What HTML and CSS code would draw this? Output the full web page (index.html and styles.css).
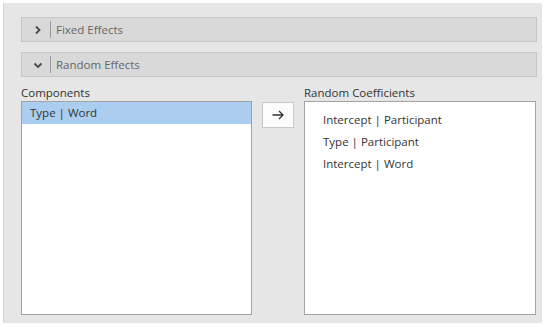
FILE: index.html
```html
<!DOCTYPE html>
<html lang="en">
  <head>
    <meta charset="UTF-8">
    <title>Random Effects</title>
    <link rel="stylesheet" href="styles.css">
  </head>
  <body>
    <div class="panel">
        <div class="section-bar">
            <svg class="chevron" width="10" height="10" viewBox="0 0 10 10">
                <path d="M3 1.5 L6.5 5 L3 8.5" />
            </svg>
            <span class="divider"></span>
            <span class="section-title">Fixed Effects</span>
        </div>
        <div class="section-bar">
            <svg class="chevron" width="10" height="10" viewBox="0 0 10 10">
                <path d="M1.5 3.5 L5 7 L8.5 3.5" />
            </svg>
            <span class="divider"></span>
            <span class="section-title">Random Effects</span>
        </div>

        <div class="effects">
            <div class="column">
                <div class="list-label">Components</div>
                <div class="list-box">
                    <div class="list-item selected">Type | Word</div>
                </div>
            </div>
            <div class="actions">
                <button class="move-button" title="Move">
                    <svg width="12" height="10" viewBox="0 0 12 10">
                        <path d="M0.5 5 H11 M7 1 L11 5 L7 9" />
                    </svg>
                </button>
            </div>
            <div class="column">
                <div class="list-label">Random Coefficients</div>
                <div class="list-box coefficients">
                    <div class="list-item">Intercept | Participant</div>
                    <div class="list-item">Type | Participant</div>
                    <div class="list-item">Intercept | Word</div>
                </div>
            </div>
        </div>
    </div>
  </body>
</html>
```

FILE: styles.css
```css
:root {
    --panel-bg: #e6e6e6;
    --bar-bg: #d9d9d9;
    --bar-border: #c6c6c6;
    --list-border: #a3a3a3;
    --select-bg: #abcdef;
    --text-main: #333;
    --text-muted: #666;
}

body {
    margin: 0;
    background: #fff;
    font-family: 'Open Sans', 'Noto Sans', sans-serif;
    font-size: 11.5px;
    color: var(--text-main);
}

.panel {
    margin: 3px 0 0 3px;
    width: 539px;
    height: 320px;
    box-sizing: border-box;
    background: var(--panel-bg);
    border-left: 1px solid #d2d2d2;
    padding: 14px 5px 0 17px;
}

.section-bar {
    height: 25px;
    box-sizing: border-box;
    background: var(--bar-bg);
    border: 1px solid var(--bar-border);
    display: flex;
    align-items: center;
    margin-bottom: 10px;
}

.chevron {
    margin-left: 11px;
    fill: none;
    stroke: #4a4a4a;
    stroke-width: 1.8;
}

.divider {
    width: 1px;
    height: 17px;
    background: #9a9a9a;
    margin: 0 5px 0 7px;
}

.section-title {
    color: var(--text-muted);
    font-size: 11.5px;
}

.effects {
    display: grid;
    grid-template-columns: 231px 32px 232px;
    column-gap: 10px;
    margin-top: -3px;
}

.column {
    display: flex;
    flex-direction: column;
}

.list-label {
    height: 17px;
    line-height: 17px;
    color: var(--text-main);
}

.list-box {
    height: 214px;
    box-sizing: border-box;
    background: #fff;
    border: 1px solid var(--list-border);
}

.list-item {
    height: 22px;
    line-height: 22px;
    padding-left: 8px;
}

.list-item.selected {
    background: var(--select-bg);
}

.coefficients {
    padding: 7px 0 0 10px;
}

.actions {
    padding-top: 18px;
}

.move-button {
    width: 32px;
    height: 26px;
    background: #fcfcfc;
    border: 1px solid #c8c8c8;
    padding: 0;
    display: flex;
    align-items: center;
    justify-content: center;
}

.move-button svg {
    fill: none;
    stroke: #333;
    stroke-width: 1.3;
}
```
